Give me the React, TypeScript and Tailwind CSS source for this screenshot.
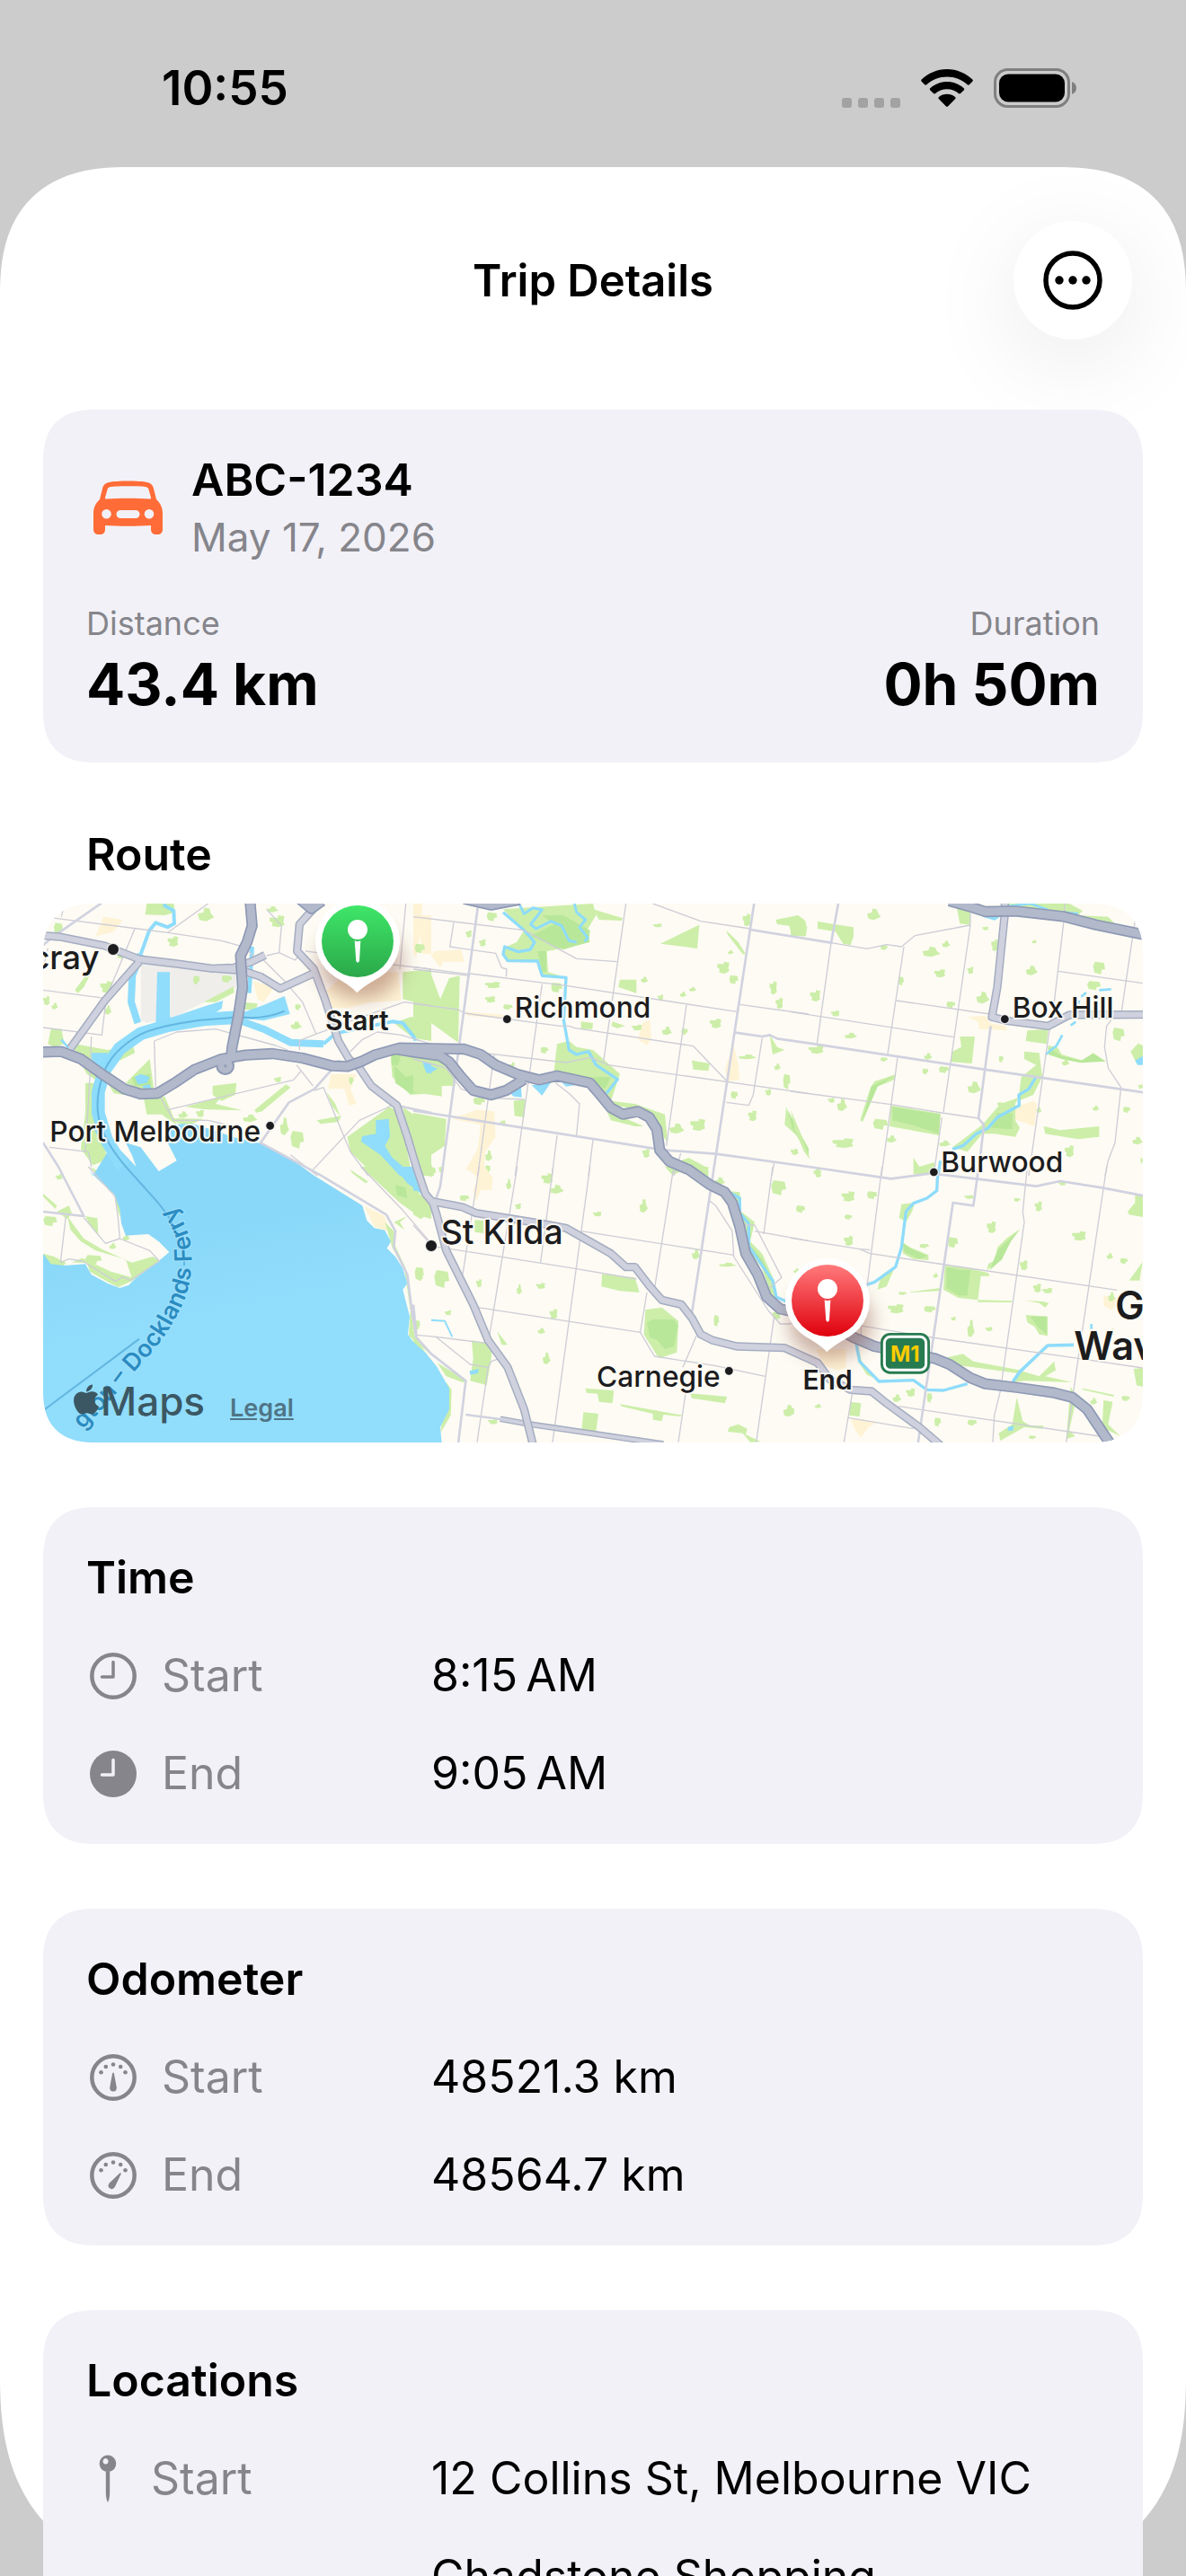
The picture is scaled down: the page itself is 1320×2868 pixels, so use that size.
import React from "react";
import { FaApple } from "react-icons/fa";

/* ------------------------------------------------------------------ */
/* Map data. Every region carries its own offset on the map canvas.    */
/* ------------------------------------------------------------------ */

type Blob = [number, number, number, number];

interface Region {
  dx: number;
  dy: number;
  parks: string[];
  deep: string[];
  blobs: Blob[];
  town: string[];
  ponds: string[];
  minor: string[];
}

const regions: Region[] = [
  {
    dx: 0,
    dy: 0,
    parks: [
      "370,21 460,21 465,50 430,60 365,58",
      "130,490 240,510 325,495 330,520 250,560 215,620 170,590 130,520",
      "50,440 85,440 95,490 60,500 40,490",
      "165,620 195,620 205,740 235,860 230,880 190,895 150,840 165,720",
      "300,620 380,540 395,650 350,640",
      "240,620 300,640 370,665 430,665 470,760 440,740 420,725 370,725 360,670 260,655",
      "590,630 670,620 665,660 620,680 590,660",
      "730,710 835,625 850,635 755,715 735,720",
      "500,700 620,665 600,690 690,712 560,708",
      "1225,250 1320,240 1320,365 1225,340",
      "1195,500 1320,485 1320,655 1250,660 1190,600 1185,540",
      "1195,420 1250,400 1320,400 1320,480 1260,470",
      "1040,800 1180,700 1215,720 1250,900 1260,930 1130,930 1050,850",
      "1225,700 1280,740 1320,800 1320,930 1290,930 1240,800",
      "560,350 660,298 662,318 600,350",
      "695,350 740,355 735,375 695,375",
      "235,860 245,850 335,900 330,905",
      "130,310 160,270 180,230 190,240 160,300 140,320",
      "440,738 560,740 500,765",
      "970,650 1000,690 1015,730 990,700",
      "938,745 1020,730 1010,750 950,757",
    ],
    deep: [
      "1195,560 1235,600 1320,580 1320,650 1250,655 1200,620",
      "1185,510 1220,520 1210,560 1188,560",
      "320,600 380,590 385,630 330,630",
    ],
    blobs: [
      [540, 35, 55, 45], [770, 30, 40, 20], [780, 60, 50, 40], [440, 130, 35, 35], [60, 85, 30, 40], [215, 280, 40, 40],
      [525, 262, 22, 30], [24, 330, 22, 30], [52, 352, 22, 22], [230, 360, 22, 32], [865, 357, 20, 20], [850, 415, 38, 26],
      [1095, 400, 20, 25], [620, 260, 35, 26], [270, 175, 32, 32], [850, 780, 45, 60], [815, 735, 30, 60],
      [535, 710, 26, 24], [475, 715, 34, 22], [795, 600, 24, 18], [690, 725, 50, 26], [1045, 600, 16, 26], [1170, 820, 34, 24],
    ],
    town: [
      "1040,250 1210,250 1220,345 1120,350 1040,370 985,370 960,320",
      "985,590 1070,590 1050,640 1070,690 1045,695 1030,640 975,640",
      "725,280 795,300 760,350 740,340",
      "225,65 290,75 260,115 200,130",
      "1275,60 1320,60 1320,190 1290,190",
    ],
    ponds: [
      "405,250 447,250 447,400 480,412 400,430",
      "450,402 560,365 625,345 620,372 560,410 470,425",
      "690,385 760,360 830,330 848,390 760,412 690,405",
      "330,600 350,590 380,600 370,620 340,625",
      "355,630 380,625 385,638 360,638",
      "1135,745 1178,740 1182,800 1165,830 1190,870 1262,930 1215,930 1150,860 1085,815 1090,798 1135,790",
      "1295,550 1320,555 1320,590 1300,580",
      "185,520 240,520 235,540 225,600 190,580",
    ],
    minor: [
      "24,65 340,105 440,118 620,145 690,165", "95,21 85,65", "440,118 575,21", "330,105 235,335 220,460 24,435", "24,310 230,337",
      "770,40 820,95 812,185 865,210 885,185", "812,185 770,195", "1235,21 1215,240", "900,180 940,185", "1190,225 1320,240",
      "185,465 180,600 165,850", "395,480 400,640 440,710 460,745 575,745 660,765", "395,480 470,450 600,440 800,495 840,510",
      "440,710 860,610 885,580", "960,635 1050,850 1110,930", "925,910 1080,745 1200,690", "960,635 930,645",
      "760,210 830,280 890,350 935,455", "880,510 880,478 980,440 1060,410 1230,350 1320,362", "870,560 925,630", "45,835 175,850 185,900",
      "1050,515 1090,475 1140,450 1220,460 1320,490", "700,170 740,210", "24,240 40,170", "940,930 850,860",
    ],
  },
  {
    dx: 1260,
    dy: 0,
    parks: [
      "300,40 600,21 610,60 580,110 590,150 500,170 445,180 450,250 510,268 430,262 415,213 310,210 300,170 345,150 370,110",
      "600,40 700,70 695,78 620,75",
      "0,265 60,258 90,340 120,270 155,262 150,485 60,420 0,400",
      "690,275 745,275 745,320 685,300",
      "480,490 520,480 545,500 600,510 690,590 660,680 740,690 840,725 850,820 820,780 800,720 700,700 640,690 580,610 470,580",
      "620,660 700,735 770,765 740,765 660,745",
      "0,540 100,545 140,590 140,630 95,630 95,665 0,650",
      "0,720 110,740 105,830 60,860 0,820",
      "825,155 955,92 948,172 905,165",
      "1045,110 1085,150 1110,190 1100,190 1050,125",
      "1210,75 1285,60 1310,80 1310,130 1265,130 1255,95 1215,90",
      "560,415 600,420 598,440 560,440",
      "665,415 708,430 680,437 662,430",
      "930,545 990,555 985,580 935,575",
      "335,680 375,675 370,735 338,730",
      "1245,700 1260,740 1320,840 1320,870 1285,800 1240,760",
      "1190,460 1215,500 1240,510 1200,525",
      "860,890 920,870 985,905 960,925",
      "0,790 60,890 70,930 50,930 20,860",
    ],
    deep: ["430,60 500,60 590,110 585,150 500,175 390,130 470,90", "415,180 445,180 445,250 430,250", "600,600 660,600 640,640 610,620", "1250,710 1320,840 1320,865 1265,770"],
    blobs: [
      [245, 50, 35, 30], [175, 110, 20, 24], [220, 140, 22, 24], [5, 155, 34, 32], [240, 282, 50, 22], [240, 330, 34, 22],
      [460, 285, 38, 34], [760, 265, 24, 20], [815, 325, 20, 18], [920, 300, 26, 14], [890, 315, 22, 18], [1015, 215, 40, 40], [1055, 260, 30, 30],
      [1190, 280, 24, 45], [1210, 335, 24, 38], [990, 405, 38, 32], [830, 432, 34, 28], [895, 438, 22, 22], [730, 425, 34, 20], [425, 500, 26, 22],
      [925, 740, 50, 40], [1118, 712, 28, 36], [1060, 648, 24, 26], [855, 755, 50, 34], [765, 840, 24, 30], [240, 845, 24, 36], [240, 895, 18, 28],
      [1085, 525, 62, 16], [1205, 555, 22, 22], [1175, 640, 20, 22], [1235, 590, 24, 52], [1265, 840, 22, 20], [290, 745, 18, 14], [200, 668, 40, 26],
      [1100, 55, 26, 42], [800, 88, 30, 12], [1050, 176, 20, 14], [300, 358, 32, 18], [320, 550, 18, 40],
    ],
    town: [
      "0,21 30,21 25,110 10,200 0,190", "70,180 160,175 170,215 100,215 90,235 60,195", "175,382 300,392 300,405 180,395",
      "765,420 790,410 795,470 780,495 750,475", "1070,490 1085,560 1090,610 1050,615 1040,575", "210,710 270,715 275,800 240,850 235,930 175,910 215,840 225,760 130,740",
      "240,790 260,800 250,840",
    ],
    ponds: ["320,652 360,635 362,668 335,665", "395,628 460,618 430,662", "30,550 80,572 70,580 45,588", "0,465 20,478 0,480", "495,618 540,628 510,632"],
    minor: [
      "0,65 370,110 545,205 680,215", "135,85 122,165 275,187 295,235 312,240 310,265", "710,21 635,550", "0,232 190,258", "0,240 190,262", "190,255 510,295 1080,382",
      "0,355 150,375 170,387 490,430 520,430 540,437 935,497 1045,612", "190,515 510,552 590,535 650,560 1320,655", "430,290 340,930", "912,360 845,830",
      "270,525 215,930", "480,795 463,930", "600,810 585,930", "800,21 960,80 1125,105", "1090,358 1320,390", "1165,470 1135,660 1120,695 1045,685",
      "475,620 520,655 555,690 545,795", "893,855 870,930", "1205,885 1197,930", "0,540 110,570 160,640 240,670 370,675",
    ],
  },
  {
    dx: 2520,
    dy: 0,
    parks: [
      "725,21 930,21 975,45 960,60 1060,65 1090,95 1020,85 900,55 730,40",
      "555,35 600,50 598,92 565,88",
      "90,80 145,90 210,100 210,130 200,160 175,155 150,115 90,105",
      "0,70 40,70 55,100 50,130 0,128",
      "790,445 860,440 855,490 785,480",
      "565,465 615,465 605,555 535,550 540,515 570,500",
      "780,515 830,520 840,600 810,660 760,680 770,600 820,560 780,540",
      "750,690 760,670 700,690 640,760 540,835 590,850 640,790 680,790 750,800 765,770 750,745",
      "860,495 890,500 905,525 975,545 1010,520 1055,550 1030,545 970,552 905,540 860,525",
      "350,592 345,610 290,632 270,680 240,750 232,745 265,640 280,615",
      "335,695 500,722 495,795 330,765",
      "845,765 900,778 1030,765 1030,800 960,808 850,790",
      "1135,515 1160,488 1176,495 1176,555 1150,545",
      "0,710 30,780 65,875 45,850 15,780",
      "410,870 430,900 480,885 480,925 410,925",
    ],
    deep: ["340,700 500,725 495,790 420,765 340,745", "860,500 905,530 970,545 1010,522 1050,548 970,553 905,540 862,525", "690,720 740,720 740,775 670,770", "350,595 290,632 240,745 270,630"],
    blobs: [
      [255, 38, 46, 38], [440, 165, 60, 34], [505, 145, 28, 22], [480, 240, 36, 28], [590, 232, 20, 24], [360, 265, 18, 30], [620, 315, 44, 40],
      [65, 310, 34, 38], [135, 378, 28, 20], [520, 348, 30, 22], [180, 452, 42, 20], [60, 495, 50, 28], [445, 520, 28, 22], [300, 535, 24, 14], [440, 572, 20, 20], [495, 565, 34, 22],
      [695, 530, 16, 22], [590, 615, 46, 40], [125, 670, 22, 16], [155, 672, 34, 42], [275, 740, 50, 36], [320, 795, 34, 24], [140, 805, 70, 32], [495, 812, 40, 20],
      [785, 228, 40, 32], [1010, 215, 40, 42], [990, 280, 46, 30], [1075, 435, 40, 46], [805, 142, 18, 12], [640, 98, 20, 12], [670, 140, 22, 40], [1110, 700, 24, 20],
      [1008, 695, 22, 18], [915, 828, 30, 40], [1140, 800, 36, 26], [820, 700, 18, 20], [690, 685, 20, 12], [0, 840, 24, 20], [75, 905, 26, 20], [300, 160, 24, 16], [905, 540, 26, 22], [1160, 625, 16, 14], [1168, 870, 8, 20],
    ],
    town: ["590,400 650,395 665,420 720,430 722,445 630,440 625,415", "750,700 810,680 822,690 815,765 780,752 748,742"],
    ponds: ["1150,545 1176,530 1176,560 1158,560"],
    minor: [
      "135,152 255,172 320,158 370,165 415,128 600,93", "600,55 600,93 510,718", "378,165 323,530", "135,152 88,490", "0,383 545,467", "352,345 665,390", "915,21 912,80 880,350",
      "893,247 1175,287", "1142,130 1105,380", "865,435 795,930", "0,648 335,692 505,720 627,738", "357,535 303,930", "505,735 480,910", "1150,80 1145,110",
      "1070,410 1055,430 1048,500 1060,570 1103,635 1083,820 1060,880 1050,930",
    ],
  },
  {
    dx: 0,
    dy: 900,
    parks: [
      "180,0 220,20 285,120 280,170 260,90",
      "105,165 130,200 160,240 220,275 320,320 390,300 412,315 320,382 275,402 240,385 180,350 170,320 120,320 155,305 250,350 320,370 300,310 200,280 150,250 115,210",
      "165,165 205,172 208,225 180,195",
      "24,290 60,300 100,320 90,335 40,325",
      "1085,0 1230,0 1280,90 1320,130 1320,175 1270,160 1215,120",
      "1165,185 1195,215 1200,265 1235,340 1255,500 1265,570 1320,630 1245,565 1250,480 1230,340 1190,270",
      "1050,10 1110,50 1100,55 1055,20",
      "24,90 70,130 65,140 24,100",
      "70,150 110,130 120,155 105,175",
      "1195,185 1240,165 1215,185 1230,210",
    ],
    deep: ["1200,60 1235,70 1240,105 1205,95"],
    blobs: [[25, 165, 46, 34], [65, 25, 24, 18], [245, 255, 24, 20], [165, 295, 55, 30], [1270, 335, 22, 46], [1265, 512, 18, 32], [290, 225, 24, 22], [1130, 0, 36, 20], [1175, 40, 26, 20], [1245, 115, 30, 24]],
    town: ["1095,130 1165,165 1175,205 1165,215 1130,200"],
    ponds: ["1195,0 1262,0 1290,70 1285,90 1240,55"],
    minor: [
      "100,165 82,320 110,308 155,315 265,382 290,368 315,380 412,315 380,280 280,240 232,256 160,170", "175,0 265,100 275,180 280,240", "1085,0 1220,140 1310,245",
    ],
  },
  {
    dx: 1260,
    dy: 900,
    parks: [
      "0,90 60,110 60,150 25,175 0,160",
      "630,358 740,370 755,420 690,415 628,400",
      "775,478 830,470 885,515 880,620 820,640 770,560",
      "195,580 265,592 260,640 245,730 190,715 200,640",
      "80,655 180,715 165,720 110,700",
      "110,720 128,745 125,830 90,890 100,830",
      "0,560 40,620 80,670 60,650 0,600",
      "1060,82 1090,85 1095,150 1140,185 1125,250 1165,290 1205,380 1215,440 1195,430 1165,340 1110,265 1090,160",
      "840,0 985,0 985,40 960,35 920,5 865,28",
      "690,793 900,830 890,834 835,828 830,850 800,845 800,825 695,800",
      "575,740 670,748 665,790 620,785 615,758 578,755",
      "925,757 1048,768 1040,790 930,773",
      "568,820 618,825 610,885 562,880",
      "280,550 315,595 295,595",
      "1055,870 1085,860 1115,875 1110,895 1160,918 1125,920 1100,890 1050,885",
      "205,178 235,180 235,222 205,218",
    ],
    deep: ["780,520 800,510 870,510 885,530 870,600 840,610 815,580 790,570", "1115,250 1165,310 1200,380 1190,380 1130,280"],
    blobs: [
      [310, 40, 18, 36], [428, 22, 38, 34], [455, 60, 48, 30], [755, 108, 28, 46], [340, 122, 20, 20], [600, 150, 28, 16], [155, 95, 32, 20], [5, 335, 30, 46], [70, 345, 50, 60],
      [210, 375, 18, 28], [345, 392, 18, 34], [410, 388, 30, 20], [455, 475, 26, 34], [415, 538, 26, 20], [432, 620, 26, 40], [105, 480, 22, 16], [930, 275, 28, 34],
      [1003, 495, 18, 40], [1195, 45, 50, 50], [1278, 130, 30, 24], [1235, 795, 38, 40], [250, 842, 32, 18], [1005, 35, 36, 26], [1200, 480, 26, 30], [40, 0, 36, 34], [1020, 320, 60, 14], [85, 0, 18, 20], [0, 515, 20, 32], [1270, 340, 24, 16],
    ],
    town: ["180,0 240,0 265,40 262,78 225,78 210,115 200,80 215,40", "835,560 855,550 850,580 825,575"],
    ponds: ["0,45 14,80 0,80", "188,682 220,675 215,690 190,695"],
    minor: [
      "0,195 45,245 80,268 300,302 540,340 745,375", "220,0 165,360", "347,0 250,590", "250,670 213,920", "467,0 425,320", "590,0 465,920", "868,10 805,410", "780,420 758,553 805,633 1010,665 1175,700",
      "215,470 758,553", "560,215 1070,295", "985,110 1010,130 1065,215 1070,300 1185,480 1225,525 1260,525", "1200,0 1170,225", "1100,195 1140,195 1230,370 1190,405", "1140,215 1320,247",
      "945,565 900,670", "910,750 885,920", "1205,500 1145,920", "10,562 75,568 250,590", "75,568 190,660 250,670 260,650 290,640",
    ],
  },
  {
    dx: 2520,
    dy: 900,
    parks: [
      "370,125 415,120 405,150 385,185 362,170",
      "370,250 400,270 460,295 460,312 410,308 375,290",
      "515,330 600,340 660,355 665,365 635,365 625,445 560,438 510,410",
      "765,208 730,250 705,310 655,345 660,325 685,310 690,270 720,240",
      "785,495 858,500 858,565 830,560 815,535 790,520",
      "300,370 350,330 320,400 290,410",
      "510,640 575,625 610,650 770,680 760,690 600,668 520,660",
      "830,700 880,650 885,680 850,700 940,720 780,715 745,720 765,680",
      "1045,780 1075,785 1060,860 1100,900 1040,870",
      "935,735 955,770 930,880 950,900 920,910",
      "755,770 775,850 800,865 845,865 840,875 780,870 700,915 695,890 740,860",
      "1125,150 1150,120 1150,90 1176,95 1176,168 1130,160",
      "1130,380 1175,318 1165,380",
      "1145,675 1176,672 1176,735 1155,730",
      "975,740 1080,762 1078,768 975,745",
      "225,600 240,660 290,710 255,695 225,650",
      "625,445 740,448 738,453 625,452",
      "400,418 500,405 500,415 400,420",
      "785,447 840,450 862,455 850,470 830,455",
      "200,785 235,790 230,835 195,830",
    ],
    deep: ["520,335 570,345 600,345 590,430 560,430 520,405", "765,210 735,250 705,310 665,345 690,280", "375,255 400,272 455,298 430,308 380,285", "800,500 855,500 855,560 825,535"],
    blobs: [
      [170, 82, 44, 34], [255, 82, 34, 26], [18, 130, 30, 22], [180, 160, 26, 16], [178, 230, 30, 34], [10, 340, 20, 16], [580, 95, 30, 12], [745, 105, 22, 12], [815, 115, 24, 34], [655, 182, 30, 40],
      [940, 215, 46, 32], [1055, 288, 22, 20], [1100, 305, 26, 20], [765, 312, 26, 34], [810, 390, 26, 30], [840, 405, 34, 18], [325, 458, 52, 32], [445, 465, 40, 22], [535, 500, 16, 14], [650, 535, 24, 14],
      [590, 510, 24, 60], [525, 235, 34, 36], [430, 258, 32, 14], [475, 355, 18, 16], [360, 418, 28, 10], [340, 760, 30, 26], [385, 740, 30, 28], [455, 755, 18, 34], [480, 838, 22, 30], [590, 845, 32, 20],
      [795, 898, 24, 12], [1105, 765, 28, 18], [1000, 772, 24, 22], [80, 792, 24, 14], [0, 805, 12, 24], [1060, 418, 24, 32], [410, 0, 36, 24], [80, 10, 22, 26], [895, 50, 24, 12], [1065, 540, 14, 24],
    ],
    town: ["85,610 185,610 185,670 160,680 110,665", "200,840 290,852 260,870 235,905 215,880", "1045,430 1090,440 1075,480 1045,465"],
    ponds: ["725,870 745,865 742,882 725,882"],
    minor: [
      "0,238 230,275 265,290 515,327 1090,412", "305,0 255,400", "790,0 775,150 780,185 700,750 680,830 675,920", "1055,0 960,640 920,920", "0,522 240,532 470,570 960,640 1175,672",
      "360,800 1030,900", "190,838 410,875", "205,760 178,920", "235,275 265,278", "235,530 235,570",
    ],
  },
];

const seaShape =
  "M190,930 L180,915 L215,950 L260,990 L280,1040 L285,1090 L300,1130 L375,1125 L410,1150 L445,1185 L410,1215 L330,1275 L310,1295 L280,1305 L240,1290 L185,1260 L165,1225 L95,1230 L50,1225 L24,1190 L24,1821 L1355,1821 L1350,1770 L1380,1710 L1380,1640 L1340,1570 L1300,1520 L1260,1485 L1242,1460 L1248,1400 L1225,1310 L1240,1290 L1225,1240 L1200,1200 L1172,1172 L1185,1150 L1165,1112 L1130,1105 L1105,1080 L1090,1030 L930,930 L860,880 L750,822 L655,800 L600,780 L520,755 L450,760 L430,800 L470,880 L410,915 L350,835 L300,820 L320,860 L335,900 L240,800 L232,760 L190,770 L240,850 Z";

const streams: { d: string; w: number }[] = [
  { d: "M425,25 L460,45 L462,88 L440,100 L400,85 L378,112 L350,190", w: 12 },
  { d: "M350,190 L322,260 L318,350 L340,420", w: 24 },
  { d: "M690,400 L560,408 L440,428 L350,455 L280,505 L230,575 L208,650 L208,720 L235,810 L290,900", w: 44 },
  { d: "M690,415 L760,440 L850,485 L960,490", w: 24 },
  { d: "M960,490 L1000,455 L1190,415 L1225,420 L1265,470", w: 12 },
  { d: "M722,165 L712,320", w: 14 },
  { d: "M85,475 L110,505", w: 8 },
  { d: "M1560,50 L1630,110 L1665,150 L1650,175 L1610,182 L1565,165 L1560,190 L1575,212 L1675,213 L1690,262 L1770,268 L1762,410 L1780,510 L1805,525 L1845,515 L1870,560 L1942,608 L1905,655", w: 10 },
  { d: "M1615,25 L1630,55 L1660,35 L1690,42 L1652,90 L1670,105 L1720,80 L1755,95 L1780,145 L1805,150", w: 9 },
  { d: "M1798,21 L1805,50 L1835,75 L1815,100 L1842,135 L1832,148", w: 9 },
  { d: "M3245,30 L3320,21 L3380,42", w: 8 },
  { d: "M3160,60 L3200,72 L3215,62", w: 10 },
  { d: "M3430,50 L3480,55", w: 8 },
  { d: "M3427,460 L3408,495 L3372,525", w: 8 },
  { d: "M3455,428 L3472,416 M3490,332 L3507,318 M3550,310 L3590,307 M3480,355 L3484,345", w: 8 },
  { d: "M3338,602 L3315,640 L3282,660 L3283,695 L3210,735 L3180,770 L3140,790 L3095,830 L3060,842", w: 10 },
  { d: "M3020,880 L3010,940 L3008,980 L2975,1005 L2930,1022 L2905,1050 L2890,1170 L2870,1235 L2800,1285 L2770,1296", w: 10 },
  { d: "M2320,988 L2350,1005 L2350,1055 L2380,1090 L2380,1165 L2460,1280 L2472,1335 L2510,1352", w: 10 },
  { d: "M2735,1470 L2750,1550 L2815,1617 L2930,1613 L2975,1645 L3030,1647 L3110,1625", w: 10 },
  { d: "M3262,1618 L3285,1585 L3378,1497 L3465,1495", w: 11 },
  { d: "M3524,1425 L3524,1442", w: 8 },
  { d: "M1320,1412 L1365,1415 L1390,1468", w: 6 },
];

const mediumRoads = [
  "24,160 60,130 225,15",
  "1475,35 1350,965 1335,1010",
  "2398,21 2385,105 2260,930 2190,1390",
  "2385,108 2655,152 2680,15",
  "2335,452 2425,465 2450,460 2475,472 2580,487 3165,575 3700,652",
  "1260,712 2100,845 2180,850 2270,857 2580,900 2855,940 2990,922 3340,965 3420,948 3560,970 3700,997",
  "3188,430 3147,738 3165,760 3155,850 3130,1030 3062,1020 2945,1825",
  "1180,690 1320,720",
  "1015,545 930,640 845,685 750,820 945,925 1170,1060 1200,1115 1195,1170 1240,1260 1255,1380 1270,1470 1320,1525 1435,1615 1410,1825",
  "1435,1728 1550,1743",
  "24,820 75,900 160,1065 24,1050",
  "1260,1360 1270,1460",
];

const majorRoads = [
  "24,128 80,132 230,162 345,207 470,222 590,238 660,235 720,215 765,193",
  "345,215 230,345 115,505",
  "600,238 690,245 750,265 815,305 925,255",
  "925,40 880,90 872,180 928,240 965,340 1010,480 1045,540 1080,570 1120,630 1205,695 1240,800 1270,900 1300,990 1325,1020 1338,1060 1370,1180 1460,1360 1510,1480 1575,1570 1630,1710 1660,1830",
  "1320,1015 1425,1035 1470,1055 1690,1090 1770,1105 1920,1190 1970,1235 2000,1235 2050,1300 2090,1345 2155,1360 2190,1405 2220,1460 2260,1480 2340,1500 2500,1505 2610,1555 2650,1610 2720,1645 2790,1650 2840,1690 2950,1770 3020,1830",
  "3235,21 3235,55 3210,300 3192,400 3240,412 3380,430 3450,393 3700,392",
];

const highways = [
  "715,15 722,95 705,150 683,195 690,300 675,400 655,500 652,530",
  "880,5 920,38 955,12",
  "1430,5 1520,26 1615,8",
  "3050,12 3120,32 3170,48 3270,46 3430,64 3540,92 3700,125",
  "1200,507 1260,517 1350,530 1380,550 1420,600 1460,645 1520,660 1570,645 1630,608",
  "10,517 85,515 150,540 220,590 295,640 350,657 405,655 460,622 530,575 620,540 700,527 790,522 890,537 990,563 1040,565 1090,547 1130,527 1215,503 1320,505 1430,507 1485,525 1535,560 1610,592 1680,610 1740,596 1850,620 1880,655 1920,703 1960,725 2010,715 2048,735 2073,775 2083,845 2115,882 2180,910 2250,960 2300,985 2325,1020 2350,1100 2370,1190 2410,1260 2440,1335 2485,1375 2600,1400 2730,1470 2800,1500 2900,1520 3000,1540 3050,1560 3120,1605 3170,1625 3280,1638 3400,1655 3460,1670 3510,1710 3550,1770 3590,1830",
];

const blobOutlines = [
  [[0, 0.2], [0.55, 0.2], [0.55, 0], [1, 0.08], [0.92, 0.55], [1, 0.8], [0.6, 1], [0.15, 0.9], [0.2, 0.6], [0, 0.5]],
  [[0.15, 0], [0.9, 0.1], [1, 0.6], [0.7, 0.65], [0.65, 1], [0.1, 0.85], [0, 0.35]],
  [[0, 0.45], [0.35, 0.35], [0.4, 0], [0.7, 0.05], [0.8, 0.4], [1, 0.7], [0.5, 1], [0.1, 0.9]],
];

const blobPoints = ([x, y, w, h]: Blob) =>
  blobOutlines[(x + y) % 3].map(([a, b]) => `${Math.round(x + a * w)},${Math.round(y + b * h)}`).join(" ");

function Pin({ x, y, fill }: { x: number; y: number; fill: string }) {
  return (
    <g transform={`translate(${x} ${y})`}>
      <ellipse cx="10" cy="70" rx="140" ry="125" fill="#7a3b2a" opacity="0.38" filter="url(#soft)" />
      <path
        d="M0 -141 A141 141 0 0 1 74 120 C40 140 20 150 -2 172 C-22 150 -40 140 -74 120 A141 141 0 0 1 0 -141Z"
        fill="#fff"
      />
      <circle r="120" fill={fill} />
      <circle cy="-39" r="33" fill="#fff" />
      <path d="M-10 -2 Q0 3 10 -2 L6 66 Q0 76 -5 66Z" fill="#fff" />
    </g>
  );
}

function MapText({ x, y, size, anchor = "start", weight = 500, children }: {
  x: number;
  y: number;
  size: number;
  anchor?: "start" | "middle" | "end";
  weight?: number;
  children: string;
}) {
  return (
    <text
      x={x}
      y={y}
      fontSize={size}
      fontWeight={weight}
      textAnchor={anchor}
      fill="#1c1c1e"
      stroke="#fdfbf3"
      strokeOpacity="0.85"
      strokeWidth="12"
      strokeLinejoin="round"
      paintOrder="stroke"
    >
      {children}
    </text>
  );
}

function RouteMap() {
  return (
    <div className="relative h-[600px] overflow-hidden rounded-[58px] bg-[#fdfbf3] [corner-shape:superellipse(1.3)]">
      <svg
        role="img"
        aria-label="Map of the trip route"
        viewBox="24 21 3672 1800"
        preserveAspectRatio="xMidYMid slice"
        className="block h-full w-full font-['Inter',sans-serif]"
      >
        <defs>
          <filter id="soft" x="-50%" y="-50%" width="200%" height="200%">
            <feGaussianBlur stdDeviation="30" />
          </filter>
          <linearGradient id="green" x1="0" y1="0" x2="0" y2="1">
            <stop offset="0" stopColor="#3fe668" />
            <stop offset="1" stopColor="#2ba84a" />
          </linearGradient>
          <linearGradient id="red" x1="0" y1="0" x2="0" y2="1">
            <stop offset="0" stopColor="#ff7a7c" />
            <stop offset="1" stopColor="#df000c" />
          </linearGradient>
          <linearGradient id="sea" x1="0" y1="0" x2="0.25" y2="1">
            <stop offset="0" stopColor="#8ad8f9" />
            <stop offset="0.4" stopColor="#8ad8f9" />
            <stop offset="0.7" stopColor="#91ddfc" />
          </linearGradient>
          <path
            id="ferry"
            d="M-60,1960 L110,1826 C180,1755 245,1690 300,1615 C360,1550 420,1490 460,1415 C500,1350 520,1290 520,1205 C520,1140 500,1080 455,1030"
          />
        </defs>

        <polygon points="350,215 690,240 690,290 470,395 370,420 350,410" fill="#efeeeb" />
        {regions.map((r, i) => (
          <g key={i} transform={`translate(${r.dx} ${r.dy})`}>
            {r.town.map((p) => <polygon key={p} points={p} fill="#fff3d6" />)}
            {r.parks.map((p) => <polygon key={p} points={p} fill="#cceea9" />)}
            {r.deep.map((p) => <polygon key={p} points={p} fill="#b9e79a" />)}
            {r.blobs.map((b) => <polygon key={b.join()} points={blobPoints(b)} fill="#cceea9" />)}
          </g>
        ))}
        <path d={seaShape} fill="url(#sea)" />
        {regions.map((r, i) => (
          <g key={i} transform={`translate(${r.dx} ${r.dy})`}>
            {r.ponds.map((p) => <polygon key={p} points={p} fill="#90dcfb" />)}
          </g>
        ))}
        <g fill="none" stroke="#8edcfb" strokeLinejoin="round">
          {streams.map((s) => <path key={s.d} d={s.d} strokeWidth={s.w} />)}
        </g>
        <g fill="none" stroke="#63b6e0" strokeWidth="6">
          <path d="M830,380 Q760,410 680,400 L550,410 Q400,430 345,460 Q250,515 225,590 Q200,660 207,720 Q215,800 300,900 L390,1000 Q500,1120 495,1230" />
          <path d="M345,1475 L30,1710" />
        </g>

        <g fill="none" stroke="#cecdd7" strokeWidth="4" strokeLinejoin="round">
          {regions.map((r, i) => (
            <g key={i} transform={`translate(${r.dx} ${r.dy})`}>
              {r.minor.map((p) => <polyline key={p} points={p} />)}
            </g>
          ))}
        </g>
        <g fill="none" strokeLinejoin="round">
          {mediumRoads.map((p) => <polyline key={p} points={p} stroke="#d1d2e0" strokeWidth="8" />)}
          <polyline points="1550,1742 1650,1760 2095,1826" stroke="#a5adc1" strokeWidth="20" />
          <polyline points="1550,1742 1650,1760 2095,1826" stroke="#cfd1de" strokeWidth="12" />
          {majorRoads.map((p) => <polyline key={p} points={p} stroke="#a5adc1" strokeWidth="28" />)}
          {majorRoads.map((p) => <polyline key={p} points={p} stroke="#cfd1de" strokeWidth="19" />)}
          <circle cx="632" cy="563" r="16" stroke="#8e99b5" strokeWidth="30" />
          {highways.map((p) => <polyline key={p} points={p} stroke="#8e99b5" strokeWidth="37" />)}
          <circle cx="632" cy="563" r="15" stroke="#b2b9cb" strokeWidth="20" />
          {highways.map((p) => <polyline key={p} points={p} stroke="#b2b9cb" strokeWidth="27" />)}
        </g>

        <text fontSize="80" fontWeight="600" fill="#2a8cc2" stroke="#a3e2fb" strokeWidth="6" paintOrder="stroke" textAnchor="end">
          <textPath href="#ferry" startOffset="100%">gton – Docklands Ferry</textPath>
        </text>

        <g fill="#1c1c1e" stroke="#fff" strokeOpacity="0.8" strokeWidth="4">
          <circle cx="258" cy="174" r="20" />
          <circle cx="1320" cy="1164" r="20" />
          <circle cx="782" cy="763" r="15" />
          <circle cx="1573" cy="407" r="15" />
          <circle cx="3235" cy="407" r="15" />
          <circle cx="2998" cy="918" r="15" />
          <circle cx="2314" cy="1582" r="15" />
        </g>
        <MapText x={212} y={240} size={110} anchor="end">cray</MapText>
        <MapText x={46} y={815} size={95}>Port Melbourne</MapText>
        <MapText x={1598} y={403} size={95}>Richmond</MapText>
        <MapText x={3260} y={403} size={95}>Box Hill</MapText>
        <MapText x={3022} y={918} size={95}>Burwood</MapText>
        <MapText x={1352} y={1158} size={112}>St Kilda</MapText>
        <MapText x={1872} y={1635} size={95}>Carnegie</MapText>
        <MapText x={3604} y={1410} size={130} weight={600}>G</MapText>
        <MapText x={3466} y={1545} size={130} weight={600}>Wav</MapText>

        <rect x="2820" y="1455" width="165" height="137" rx="32" fill="#277b51" />
        <rect x="2833" y="1468" width="139" height="111" rx="20" fill="none" stroke="#fff" strokeWidth="9" />
        <text x="2902" y="1551" fontSize="72" fontWeight="700" textAnchor="middle" fill="#ffcc00">M1</text>

        <Pin x={1074} y={147} fill="url(#green)" />
        <Pin x={2643} y={1347} fill="url(#red)" />
        <MapText x={1072} y={444} size={90} anchor="middle" weight={600}>Start</MapText>
        <MapText x={2643} y={1645} size={90} anchor="middle" weight={600}>End</MapText>
      </svg>
      <div className="absolute bottom-[18px] left-8 flex items-baseline">
        <span className="flex items-center text-[44px] leading-[52px] font-medium text-[#3b5763]">
          <FaApple aria-hidden="true" className="mb-1 h-[38px] w-8" />
          Maps
        </span>
        <a href="#legal" className="ml-7 text-[27px] font-semibold text-[#4f7485] underline">Legal</a>
      </div>
    </div>
  );
}

/* ------------------------------------------------------------------ */
/* Icons                                                               */
/* ------------------------------------------------------------------ */

function CarIcon() {
  return (
    <svg viewBox="0 0 77 60" className="h-[60px] w-[77px]" fill="#ff6c37" fillRule="evenodd" aria-hidden="true">
      <path d="M17 2 C25 0 52 0 60 2 C64 3 66 5 67 9 L70 21 C74 25 77 29 77 37 V54 C77 58 75 60 71 60 H70 C66 60 64 58 64 54 V50 C48 51 29 51 13 50 V54 C13 58 11 60 7 60 H6 C2 60 0 58 0 54 V37 C0 29 3 25 7 21 L10 9 C11 5 13 3 17 2Z M19 7 C17 7.500 16 8 15.500 10 L13 19 C13 20 13 20.500 14 20.500 C28 19.500 49 19.500 63 20.500 C64 20.500 64 20 64 19 L61.500 10 C61 8 60 7.500 58 7 C50 6 27 6 19 7Z M14.500 32 A5.300 5.300 0 1 0 14.500 42.600 A5.300 5.300 0 1 0 14.500 32Z M62 32 A5.300 5.300 0 1 0 62 42.600 A5.300 5.300 0 1 0 62 32Z M30 33 A4.500 4.500 0 0 0 30 42 H47 A4.500 4.500 0 0 0 47 33Z" />
    </svg>
  );
}

function ClockIcon({ filled = false }: { filled?: boolean }) {
  return (
    <svg viewBox="0 0 52 52" className="h-[52px] w-[52px]" fill="none" strokeLinecap="round" strokeLinejoin="round" aria-hidden="true">
      <circle cx="26" cy="26" r={filled ? 26 : 23.7} fill={filled ? "#85858b" : "none"} stroke={filled ? "none" : "#85858b"} strokeWidth="4.500" />
      <path d="M26 10.500 V27 H13.500" stroke={filled ? "#f2f1f7" : "#85858b"} strokeWidth="3.500" />
    </svg>
  );
}

function GaugeIcon({ angle = 0 }: { angle?: number }) {
  return (
    <svg viewBox="-26 -26 52 52" className="h-[52px] w-[52px]" fill="#85858b" aria-hidden="true">
      <circle r="23.700" fill="none" stroke="#85858b" strokeWidth="4.500" />
      <circle cy="-14.500" r="2.300" />
      <circle cx="-8.200" cy="-12" r="2.300" />
      <circle cx="8.200" cy="-12" r="2.300" />
      <circle cx="-13.500" cy="-5.800" r="2.300" />
      <circle cx="13.500" cy="-5.800" r="2.300" />
      <path d="M-0.900 -4.500 Q0 -6.500 0.900 -4.500 L3.800 11 Q4 15.500 0 15.500 Q-4 15.500 -3.800 11Z" transform={`rotate(${angle} 0 9)`} />
    </svg>
  );
}

function MapPinIcon() {
  return (
    <svg viewBox="0 0 20 54" className="h-[54px] w-5" fill="#85858b" fillRule="evenodd" aria-hidden="true">
      <path d="M10 0.500 A9.300 9.300 0 1 1 9.900 0.500Z M7.500 4 A3 3.300 0 1 0 7.600 4Z" />
      <path d="M7.800 19 H12.200 V42 Q12 50 10 53 Q8 50 7.800 42Z" />
    </svg>
  );
}

function StatusBar() {
  return (
    <header className="flex h-[186px] shrink-0 items-center justify-between pr-[120px] pb-[2px] pl-[180px]">
      <time className="pt-3 text-[53px] leading-[61px] font-semibold">10:55</time>
      <div className="flex items-center gap-[23px] pt-3">
        <span className="flex gap-[7px] pt-8" aria-label="No signal">
          <i className="size-[11px] rounded-[3px] bg-[#a2a2a2]" />
          <i className="size-[11px] rounded-[3px] bg-[#a2a2a2]" />
          <i className="size-[11px] rounded-[3px] bg-[#a2a2a2]" />
          <i className="size-[11px] rounded-[3px] bg-[#a2a2a2]" />
        </span>
        <svg viewBox="0 0 58 42" className="h-[42px] w-[58px]" aria-label="Wi-Fi">
          <path d="M29 0 C40 0 50 4.500 57.300 11.500 Q58.300 12.600 57.300 13.700 L53.800 17.200 Q52.800 18.100 51.700 17.200 C45.500 11.500 37.500 8.400 29 8.400 C20.500 8.400 12.500 11.500 6.300 17.200 Q5.200 18.100 4.200 17.200 L0.700 13.700 Q-0.300 12.600 0.700 11.500 C8 4.500 18 0 29 0Z M29 14 C36.200 14 42.700 16.700 47.700 21.200 Q48.800 22.300 47.700 23.400 L44 27 Q43 27.900 41.900 27 C38.400 24 34 22.300 29 22.300 C24 22.300 19.600 24 16.100 27 Q15 27.900 14 27 L10.300 23.400 Q9.200 22.300 10.300 21.200 C15.300 16.700 21.800 14 29 14Z M29 27.800 C32.400 27.800 35.600 29 38 31 Q39.200 32.100 38 33.300 L30.200 41.200 Q29 42.300 27.800 41.200 L20 33.300 Q18.800 32.100 20 31 C22.400 29 25.600 27.800 29 27.800Z" />
        </svg>
        <svg viewBox="0 0 94 44" className="h-11 w-[94px]" aria-label="Battery full">
          <rect x="1.500" y="1.500" width="82" height="41" rx="14" fill="none" stroke="#7f7f7f" strokeWidth="3" />
          <rect x="6" y="6.500" width="73" height="31" rx="10" />
          <path d="M87 15 Q92 17 92 22 Q92 27 87 29Z" fill="#7f7f7f" />
        </svg>
      </div>
    </header>
  );
}

/* ------------------------------------------------------------------ */
/* Cards                                                               */
/* ------------------------------------------------------------------ */

function Row({ icon, label, value, narrow = false }: { icon: React.ReactNode; label: string; value: string; narrow?: boolean }) {
  return (
    <div className="grid grid-cols-[384px_1fr] items-center">
      <dt className="flex h-[61px] items-center gap-6 text-[#85858b]">
        <span className={narrow ? "flex w-[48px] justify-center" : "flex w-[60px] justify-center"}>{icon}</span>
        {label}
      </dt>
      <dd className="whitespace-pre-line">{value}</dd>
    </div>
  );
}

function Card({ title, children }: { title: string; children: React.ReactNode }) {
  return (
    <section className="rounded-[58px] bg-[#f2f1f7] p-12 text-[50px] leading-[61px] [corner-shape:superellipse(1.3)]">
      <h2 className="mb-12 font-semibold">{title}</h2>
      <dl className="flex flex-col gap-12">{children}</dl>
    </section>
  );
}

export default function App() {
  return (
    <div className="flex h-screen flex-col overflow-hidden bg-[#cccccc] font-['Inter',sans-serif] text-black">
      <StatusBar />
      <main className="min-h-0 flex-1 rounded-t-[142px] rounded-b-[222px] bg-white [corner-shape:superellipse(1.3)]">
        <div className="grid grid-cols-[1fr_auto_1fr] items-center px-[60px] pt-[60px] pb-[78px]">
          <h1 className="col-start-2 text-[49px] leading-[61px] font-semibold">Trip Details</h1>
          <button
            type="button"
            aria-label="More options"
            className="flex size-[132px] items-center justify-center justify-self-end rounded-full bg-white shadow-[0_24px_110px_rgba(0,0,0,0.09)]"
          >
            <svg viewBox="0 0 66 66" className="size-[66px]" aria-hidden="true">
              <circle cx="33" cy="33" r="30" fill="none" stroke="#000" strokeWidth="5.500" />
              <circle cx="18" cy="33" r="4.700" />
              <circle cx="33" cy="33" r="4.700" />
              <circle cx="48" cy="33" r="4.700" />
            </svg>
          </button>
        </div>

        <div className="flex flex-col gap-[72px] px-12">
          <section className="rounded-[58px] bg-[#f2f1f7] p-12 [corner-shape:superellipse(1.3)]">
            <div className="flex items-center gap-8 pl-2">
              <CarIcon />
              <div>
                <h2 className="mb-[6px] text-[50px] leading-[61px] font-semibold">ABC-1234</h2>
                <p className="text-[44px] leading-[54px] text-[#85858b]">May 17, 2026</p>
              </div>
            </div>
            <dl className="mt-12 flex justify-between">
              <div>
                <dt className="mb-[6px] text-[36px] leading-[43px] text-[#85858b]">Distance</dt>
                <dd className="text-[64px] leading-[79px] font-bold">43.4 km</dd>
              </div>
              <div className="text-right">
                <dt className="mb-[6px] text-[36px] leading-[43px] text-[#85858b]">Duration</dt>
                <dd className="text-[64px] leading-[79px] font-bold">0h 50m</dd>
              </div>
            </dl>
          </section>

          <section>
            <h2 className="mb-6 pl-12 text-[50px] leading-[61px] font-semibold">Route</h2>
            <RouteMap />
          </section>

          <Card title="Time">
            <Row icon={<ClockIcon />} label="Start" value={"8:15\u202fAM"} />
            <Row icon={<ClockIcon filled />} label="End" value={"9:05\u202fAM"} />
          </Card>

          <Card title="Odometer">
            <Row icon={<GaugeIcon />} label="Start" value="48521.3 km" />
            <Row icon={<GaugeIcon angle={36} />} label="End" value="48564.7 km" />
          </Card>

          <Card title="Locations">
            <Row narrow icon={<MapPinIcon />} label="Start" value="12 Collins St, Melbourne VIC" />
            <Row narrow icon={<MapPinIcon />} label="End" value={"Chadstone Shopping\nCentre, Chadstone VIC"} />
          </Card>
        </div>
      </main>
    </div>
  );
}
